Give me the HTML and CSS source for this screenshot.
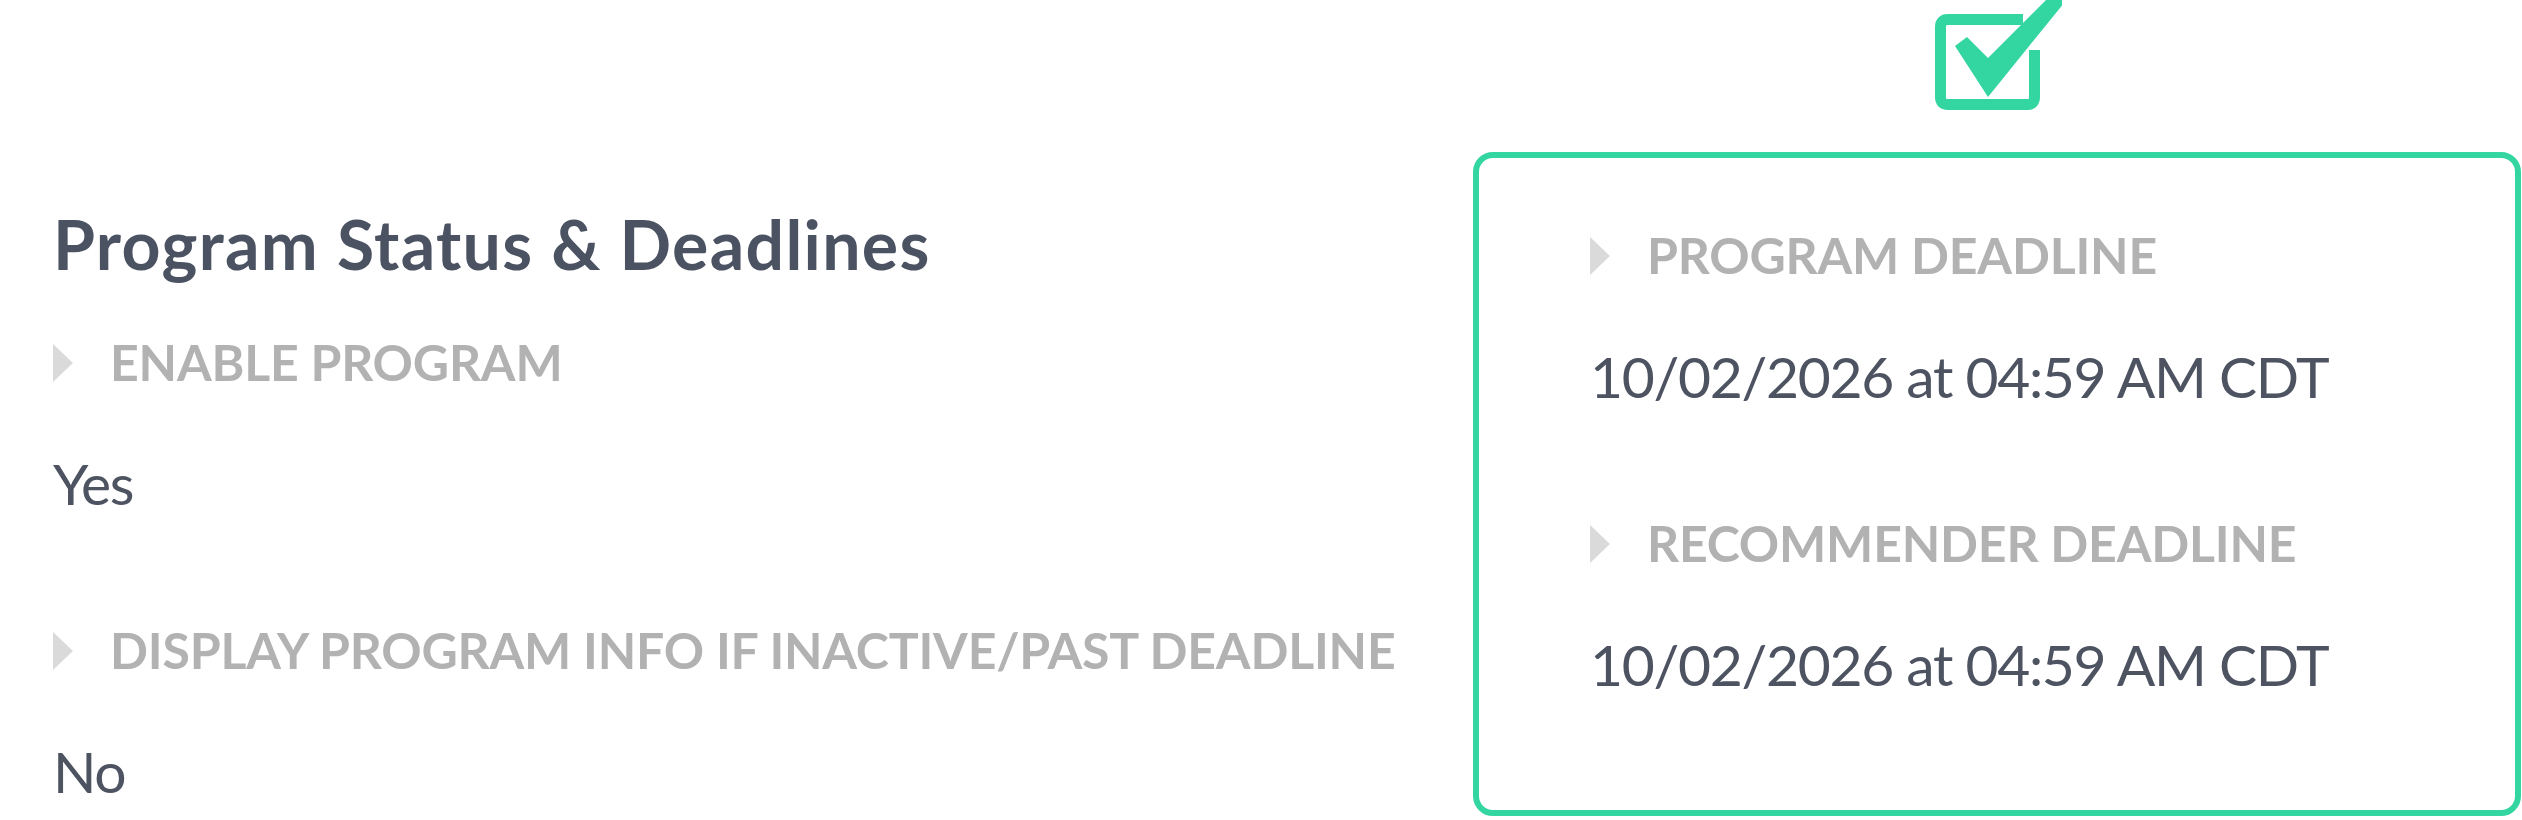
FILE: index.html
```html
<!DOCTYPE html>
<html lang="en">
<head>
    <meta charset="UTF-8">
    <meta name="viewport" content="width=device-width, initial-scale=1.0">
    <title>Program Status &amp; Deadlines</title>
    <link rel="stylesheet" href="styles.css">
</head>
<body>
    <div class="page">
        <div class="status">
            <h2 class="title">Program Status &amp; Deadlines</h2>

            <div class="field">
                <div class="label"><span class="caret"></span>Enable Program</div>
                <div class="value">Yes</div>
            </div>

            <div class="field">
                <div class="label"><span class="caret"></span>Display Program Info If Inactive/Past Deadline</div>
                <div class="value">No</div>
            </div>
        </div>

        <div class="deadlines">
            <svg class="check-icon" width="130" height="116" viewBox="32 0 130 116">
                <path d="M123 19.5 H48 Q40.5 19.5 40.5 27 V97 Q40.5 104.5 48 104.5 H127 Q134.5 104.5 134.5 97 V50"
                      fill="none" stroke="#33d5a0" stroke-width="11"/>
                <path d="M55 46 L67 37 L88 58 L146 0 L164 0 L164 3 L88 97 Z" fill="#33d5a0"/>
            </svg>

            <div class="deadline-box">
                <div class="field">
                    <div class="label"><span class="caret"></span>Program Deadline</div>
                    <div class="value">10/02/2026 at 04:59 AM CDT</div>
                </div>

                <div class="field">
                    <div class="label"><span class="caret"></span>Recommender Deadline</div>
                    <div class="value">10/02/2026 at 04:59 AM CDT</div>
                </div>
            </div>
        </div>
    </div>
</body>
</html>
```

FILE: styles.css
```css
body {
    font-family: 'Lato', 'Liberation Sans', sans-serif;
    background-color: #fff;
    margin: 0;
}

.page {
    display: flex;
    align-items: flex-start;
    padding-left: 53px;
    padding-right: 1px;
}

.status {
    flex: 1;
    margin-top: 211px;
}

.title {
    color: #4b5262;
    font-size: 68px;
    font-weight: 700;
    letter-spacing: 1.3px;
    line-height: 66px;
    margin: 0 0 60px 0;
}

.field + .field {
    margin-top: 113px;
}

.label {
    display: flex;
    align-items: center;
    color: #b2b2b2;
    font-size: 50px;
    font-weight: 700;
    letter-spacing: -0.2px;
    line-height: 51px;
    text-transform: uppercase;
    white-space: nowrap;
}

.caret {
    width: 0;
    height: 0;
    border-left: 20px solid #dadada;
    border-top: 19px solid transparent;
    border-bottom: 19px solid transparent;
    margin-right: 37px;
}

.value {
    color: #4d5361;
    font-size: 57px;
    letter-spacing: -1.3px;
    line-height: 58px;
    margin-top: 66px;
}

.deadlines {
    width: 1048px;
    display: flex;
    flex-direction: column;
    align-items: center;
}

.check-icon {
    display: block;
    margin-bottom: 36px;
}

.deadline-box {
    align-self: stretch;
    border: 6px solid #33d5a0;
    border-radius: 20px;
    padding: 72px 40px 117px 111px;
}
```
